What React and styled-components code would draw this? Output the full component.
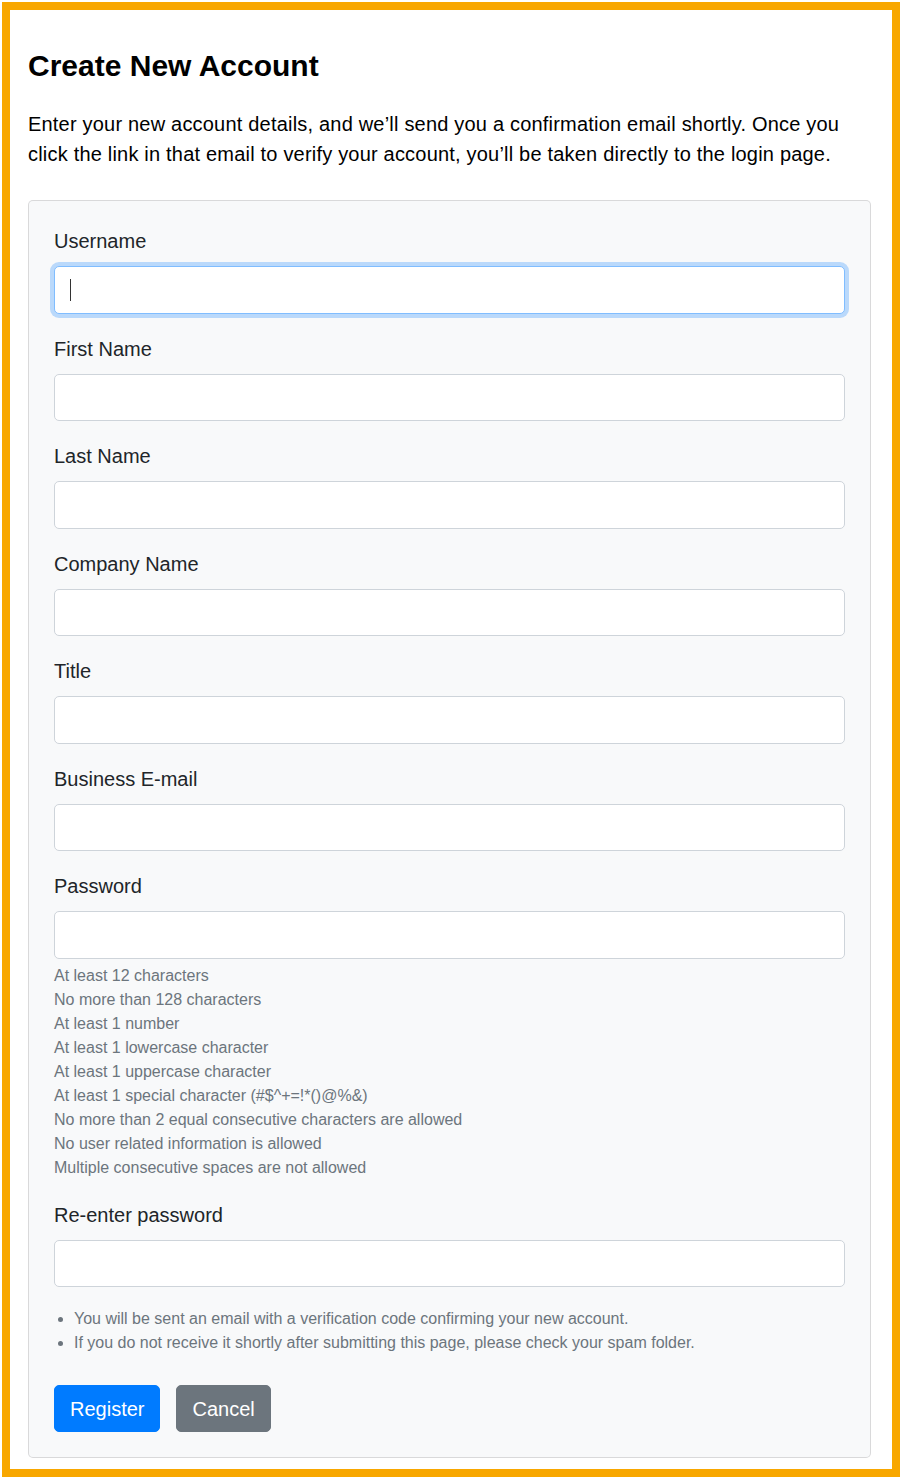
import React from 'react'
import styled, { createGlobalStyle, css } from 'styled-components'

const GlobalStyle = createGlobalStyle`
  html, body {
    margin: 0;
    padding: 0;
    background: #fff;
  }
  body {
    font-family: "Liberation Sans", Arial, sans-serif;
    font-size: 20px;
    line-height: 1.5;
    color: #212529;
  }
  #root {
    padding: 2px 0 0 2px;
  }
  *, *::before, *::after {
    box-sizing: border-box;
  }
`

const fields = [
  { label: 'Username', focused: true },
  { label: 'First Name' },
  { label: 'Last Name' },
  { label: 'Company Name' },
  { label: 'Title' },
  { label: 'Business E-mail' },
  { label: 'Password', type: 'password' },
]

const rules = [
  'At least 12 characters',
  'No more than 128 characters',
  'At least 1 number',
  'At least 1 lowercase character',
  'At least 1 uppercase character',
  'At least 1 special character (#$^+=!*()@%&)',
  'No more than 2 equal consecutive characters are allowed',
  'No user related information is allowed',
  'Multiple consecutive spaces are not allowed',
]

const App = () => {
  return (
    <>
      <GlobalStyle />
      <Frame>
        <Heading>Create New Account</Heading>
        <Intro>
          Enter your new account details, and we’ll send you a confirmation email shortly. Once you
          click the link in that email to verify your account, you’ll be taken directly to the login
          page.
        </Intro>

        <Card>
          {fields.map((field, index) => (
            <Field key={index} {...field}>
              {field.label === 'Password' && (
                <Hints>
                  {rules.map((rule, i) => (
                    <li key={i}>{rule}</li>
                  ))}
                </Hints>
              )}
            </Field>
          ))}

          <Field label="Re-enter password" type="password" />

          <Notes>
            <li>You will be sent an email with a verification code confirming your new account.</li>
            <li>If you do not receive it shortly after submitting this page, please check your spam folder.</li>
          </Notes>

          <Actions>
            <Button>Register</Button>
            <Button variant="secondary">Cancel</Button>
          </Actions>
        </Card>
      </Frame>
    </>
  )
}

const Field = ({ label, type = 'text', focused, children }) => {
  return (
    <Group>
      <Label>{label}</Label>
      <InputWrap>
        <Input type={type} $focused={focused} />
        {focused && <Caret />}
      </InputWrap>
      {children}
    </Group>
  )
}

const Frame = styled.div`
  width: 898px;
  height: 1475px;
  border: 8px solid #f8a700;
  padding: 38px 21px 0 18px;
`

const Heading = styled.h4`
  margin: 0 0 25px;
  font-size: 30px;
  line-height: 36px;
  font-weight: bold;
  color: #000;
`

const Intro = styled.p`
  margin: 0 0 31px;
  font-size: 20px;
  line-height: 30px;
  letter-spacing: 0.2px;
  color: #000;
`

const Card = styled.div`
  background: #f8f9fa;
  border: 1px solid rgba(0, 0, 0, 0.125);
  border-radius: 5px;
  padding: 25px;
`

const Group = styled.div`
  margin-bottom: 20px;
`

const Label = styled.label`
  display: block;
  margin-bottom: 10px;
  line-height: 30px;
`

const InputWrap = styled.div`
  position: relative;
`

const Input = styled.input`
  display: block;
  width: 100%;
  height: 47.5px;
  padding: 7.5px 15px;
  font-family: inherit;
  font-size: 20px;
  color: #495057;
  background: #fff;
  border: 1px solid #ced4da;
  border-radius: 5px;
  outline: none;

  ${(p) =>
    p.$focused &&
    css`
      border-color: #80bdff;
      box-shadow: 0 0 0 4px rgba(0, 123, 255, 0.25);
    `}
`

const Caret = styled.span`
  position: absolute;
  left: 16px;
  top: 13px;
  width: 1px;
  height: 22px;
  background: #333;
`

const Hints = styled.ul`
  list-style: none;
  margin: 5px 0 0;
  padding: 0;
  font-size: 16px;
  line-height: 24px;
  color: #6c757d;
`

const Notes = styled.ul`
  margin: 0 0 30px;
  padding-left: 20px;
  font-size: 16px;
  line-height: 24px;
  color: #6c757d;
`

const Actions = styled.div`
  display: flex;
  gap: 16px;
`

const Button = styled.button`
  font-family: inherit;
  font-size: 20px;
  line-height: 30px;
  padding: 7.5px 15px;
  border: 1px solid ${(p) => (p.variant === 'secondary' ? '#6c757d' : '#007bff')};
  border-radius: 5px;
  background: ${(p) => (p.variant === 'secondary' ? '#6c757d' : '#007bff')};
  color: #fff;
  cursor: pointer;
`

export default App
